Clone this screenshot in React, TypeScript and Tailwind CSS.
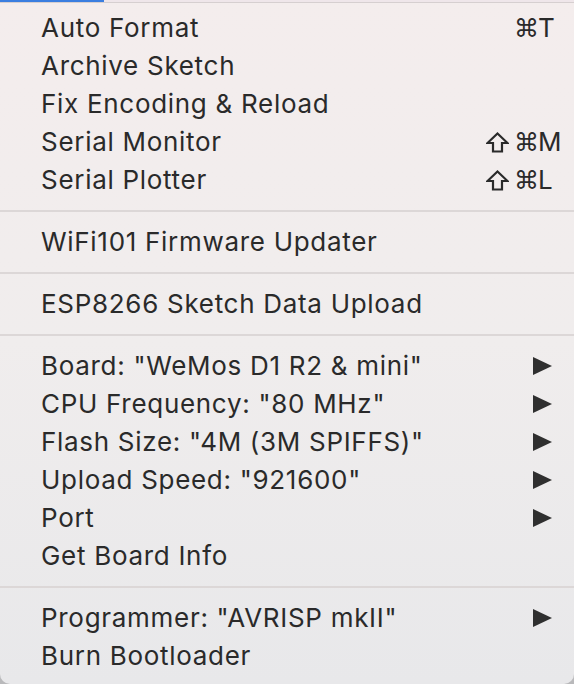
import React from "react";

type Item = { label: string; mods?: string[]; key?: string; sub?: boolean };

const groups: Item[][] = [
  [
    { label: "Auto Format", mods: ["cmd"], key: "T" },
    { label: "Archive Sketch" },
    { label: "Fix Encoding & Reload" },
    { label: "Serial Monitor", mods: ["shift", "cmd"], key: "M" },
    { label: "Serial Plotter", mods: ["shift", "cmd"], key: "L" },
  ],
  [{ label: "WiFi101 Firmware Updater" }],
  [{ label: "ESP8266 Sketch Data Upload" }],
  [
    { label: 'Board: "WeMos D1 R2 & mini"', sub: true },
    { label: 'CPU Frequency: "80 MHz"', sub: true },
    { label: 'Flash Size: "4M (3M SPIFFS)"', sub: true },
    { label: 'Upload Speed: "921600"', sub: true },
    { label: "Port", sub: true },
    { label: "Get Board Info" },
  ],
  [
    { label: 'Programmer: "AVRISP mkII"', sub: true },
    { label: "Burn Bootloader" },
  ],
];

function Arrow() {
  return (
    <svg width="19" height="18" viewBox="0 0 19 18" className="block">
      <path d="M0 0 L19 9 L0 18 Z" fill="#2f2f2f" />
    </svg>
  );
}

function Shift() {
  return (
    <svg width="23" height="21" viewBox="0 0 23 21" className="block">
      <path
        d="M11.5 1.5 L21.5 11 L16 11 L16 19.5 L7 19.5 L7 11 L1.5 11 Z"
        fill="none"
        stroke="#2a2a2a"
        strokeWidth="2.2"
        strokeLinejoin="miter"
      />
    </svg>
  );
}

function Cmd() {
  return (
    <span className="block w-[23px] text-center font-['DejaVu_Sans'] text-[25px] leading-none">
      ⌘
    </span>
  );
}

function Row({ item }: { item: Item }) {
  return (
    <div className="flex h-[38px] items-center pl-[41px] pr-[22px]">
      <span className="flex-1 whitespace-nowrap tracking-[0.7px]">{item.label}</span>
      {item.mods && (
        <span className="-mr-[11px] flex items-center">
          <span className="flex items-center gap-[5px]">
            {item.mods.map((m, i) =>
              m === "cmd" ? <Cmd key={i} /> : <Shift key={i} />
            )}
          </span>
          <span className="w-[26px] pl-[1px]">{item.key}</span>
        </span>
      )}
      {item.sub && <Arrow />}
    </div>
  );
}

export default function App() {
  return (
    <div className="h-[684px] w-[574px] overflow-hidden bg-[#b9b9bb]">
      <div className="relative flex h-[684px] w-[574px] flex-col rounded-b-[10px] bg-gradient-to-b from-[#f4eded] via-[#f0eded] to-[#e8e8ea] font-['Inter',sans-serif] text-[26px] leading-none text-[#2a2a2a]">
        <div className="flex h-[2px] w-full">
          <div className="h-[2px] w-[104px] bg-[#3b7ee0]" />
          <div className="h-[2px] flex-1 bg-[#efe6ea]" />
        </div>
        <div className="h-[1px] w-full bg-[#d6cfd0]" />
        <div className="h-[6px]" />
        {groups.map((g, gi) => (
          <React.Fragment key={gi}>
            {gi > 0 && (
              <div className="flex h-[24px] items-center">
                <div className="h-[2px] w-full bg-[#dcd7d7]" />
              </div>
            )}
            {g.map((it, ii) => (
              <Row key={ii} item={it} />
            ))}
          </React.Fragment>
        ))}
      </div>
    </div>
  );
}
